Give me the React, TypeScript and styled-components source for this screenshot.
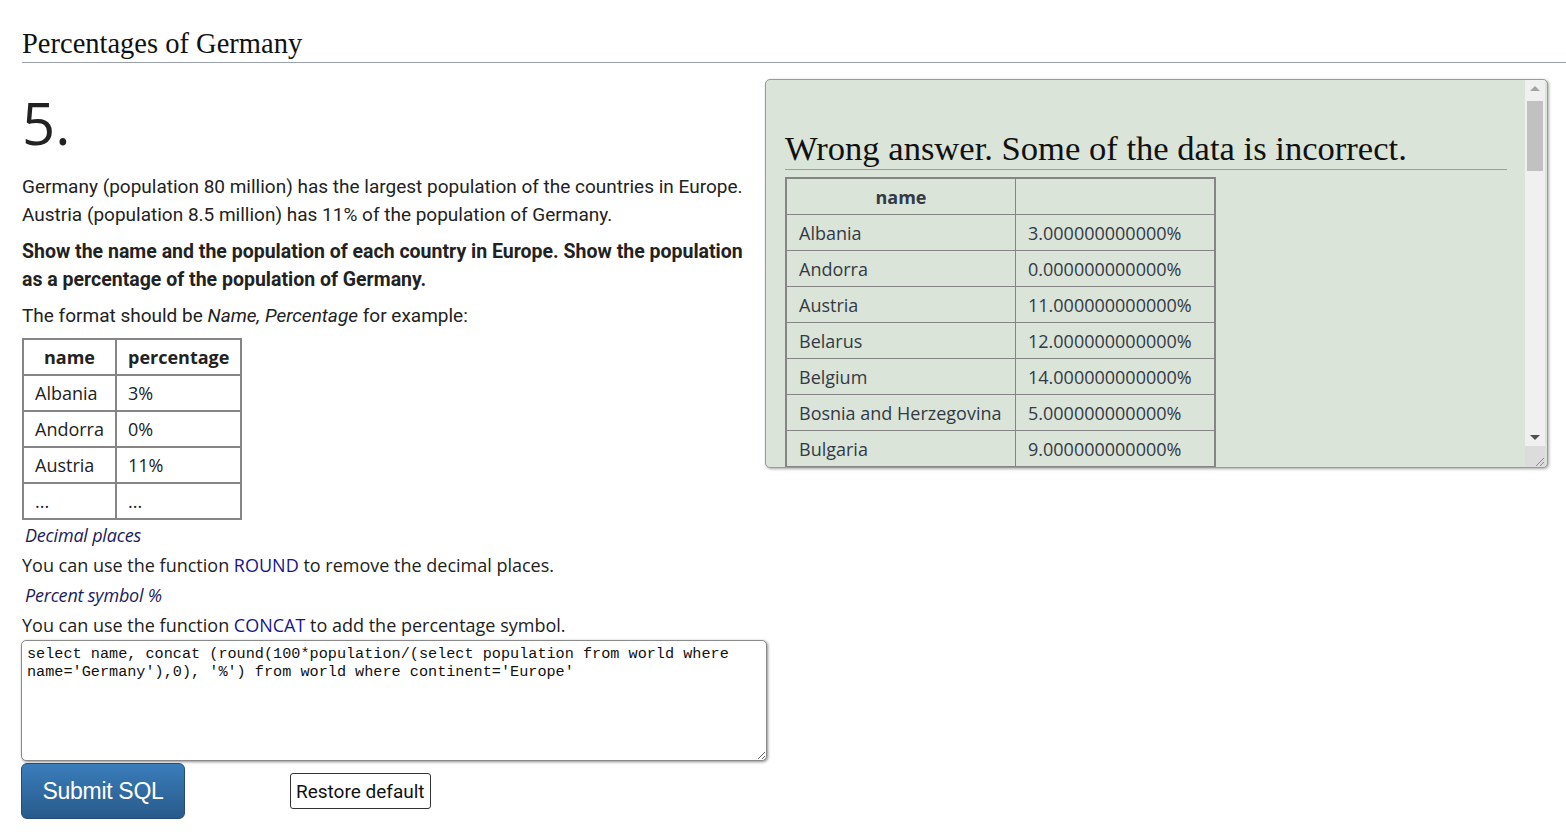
import React from "react";
import styled, { createGlobalStyle } from "styled-components";

const GlobalStyle = createGlobalStyle`
  html, body {
    margin: 0;
    padding: 0;
    background: #ffffff;
  }
  body {
    font-family: Roboto, "Liberation Sans", sans-serif;
    color: #222222;
    overflow: hidden;
  }
`;

const Page = styled.div`
  padding: 22px 0 0 22px;
`;

const Title = styled.h1`
  margin: 0;
  padding: 6px 0 2px 0;
  font-family: "Liberation Serif", serif;
  font-weight: normal;
  font-size: 28.5px;
  line-height: 32px;
  color: #111111;
  border-bottom: 1px solid #9aa0aa;
`;

const Columns = styled.div`
  display: flex;
  align-items: flex-start;
`;

const Left = styled.div`
  width: 744px;
  flex-shrink: 0;
`;

const Number = styled.div`
  font-family: "Open Sans", sans-serif;
  font-size: 58px;
  line-height: 60px;
  color: #222222;
  margin: 30px 0 20px 0;
`;

const Para = styled.p<{ bold?: boolean }>`
  margin: ${(p) => (p.bold ? "9px" : "8px")} 0 0 0;
  font-size: ${(p) => (p.bold ? "19.5px" : "19px")};
  line-height: 28px;
  font-weight: ${(p) => (p.bold ? 700 : 400)};
  color: #222222;
  &:first-of-type {
    margin-top: 0;
  }
`;

const Example = styled.table`
  margin-top: 8px;
  border-collapse: collapse;
  border: 2px solid #858585;
  font-family: "Open Sans", sans-serif;
  font-size: 18px;
  color: #222;
`;

const Th = styled.th`
  border: 2px solid #858585;
  height: 34px;
  padding: 0 11px;
  font-weight: 700;
`;

const Td = styled.td`
  border: 2px solid #858585;
  height: 34px;
  padding: 0 11px;
`;

const Hint = styled.div`
  font-family: "Open Sans", sans-serif;
  font-style: italic;
  font-size: 18px;
  line-height: 30px;
  color: #1c1c5c;
  padding-left: 3px;
  letter-spacing: -0.2px;
`;

const Line = styled.div`
  font-family: "Open Sans", sans-serif;
  font-size: 18px;
  line-height: 30px;
  color: #222;
`;

const Fn = styled.span`
  color: #16168a;
`;

const Editor = styled.textarea`
  display: block;
  box-sizing: border-box;
  width: 746px;
  height: 121px;
  margin: 0 0 0 -1px;
  padding: 4px 5px;
  font-family: "Liberation Mono", monospace;
  font-size: 15.2px;
  line-height: 18px;
  color: #111;
  border: 1px solid #8a8a8a;
  border-radius: 5px;
  box-shadow: 1px 1px 3px rgba(0, 0, 0, 0.45);
  resize: both;
  background: #fff;
`;

const Buttons = styled.div`
  display: flex;
  align-items: center;
  margin-top: 2px;
  margin-left: -1px;
`;

const Submit = styled.button`
  width: 164px;
  height: 56px;
  border: 1px solid #234d75;
  border-radius: 6px;
  background: linear-gradient(#3a7dbb, #285a8a);
  color: #ffffff;
  font-family: "Liberation Sans", Arial, sans-serif;
  font-size: 23px;
  letter-spacing: -0.3px;
  cursor: pointer;
`;

const Restore = styled.button`
  margin-left: 105px;
  height: 36px;
  padding: 0 5px;
  background: #ffffff;
  border: 1px solid #333333;
  border-radius: 3px;
  font-family: Roboto, sans-serif;
  font-size: 19px;
  color: #111;
`;

const Result = styled.div`
  box-sizing: border-box;
  display: flex;
  width: 783px;
  height: 389px;
  margin: 16px 0 0 -1px;
  padding-right: 2px;
  background: #dae4d9;
  border: 1px solid #9a9a9a;
  border-radius: 5px;
  box-shadow: 1px 1px 3px rgba(0, 0, 0, 0.35);
  overflow: hidden;
`;

const ResultBody = styled.div`
  flex: 1;
  min-width: 0;
  padding-left: 19px;
  overflow: hidden;
`;

const ScrollBar = styled.div`
  width: 20px;
  flex-shrink: 0;
  display: flex;
  flex-direction: column;
  background: #f0f0f0;
`;

const Arrow = styled.div<{ down?: boolean }>`
  height: 17px;
  display: flex;
  align-items: center;
  justify-content: center;
  &::after {
    content: "";
    border-left: 5px solid transparent;
    border-right: 5px solid transparent;
    ${(p) =>
      p.down
        ? "border-top: 5px solid #505050;"
        : "border-bottom: 5px solid #a3a3a3;"}
  }
`;

const Track = styled.div`
  flex: 1;
  padding: 4px 2px;
`;

const Thumb = styled.div`
  height: 70px;
  background: #c1c1c1;
`;

const Grip = styled.div`
  height: 21px;
  background: #dcdcdc;
  display: flex;
  align-items: flex-end;
  justify-content: flex-end;
`;

const Verdict = styled.h2`
  margin: 48px 0 7px 0;
  width: 722px;
  padding-bottom: 1px;
  font-family: "Liberation Serif", serif;
  font-weight: normal;
  font-size: 34.6px;
  line-height: 40px;
  color: #111;
  border-bottom: 1px solid #9aa0a0;
`;

const ResultTable = styled.table`
  border-collapse: collapse;
  border: 2px solid #858585;
  font-family: "Open Sans", sans-serif;
  font-size: 18px;
  color: #333a44;
`;

const RTh = styled.th<{ wide?: boolean }>`
  border: 1px solid #858585;
  height: 35px;
  padding: 0 12px;
  font-weight: 700;
  width: ${(p) => (p.wide ? "204px" : "170px")};
`;

const RTd = styled.td<{ wide?: boolean }>`
  border: 1px solid #858585;
  height: 35px;
  padding: 0 12px;
  white-space: nowrap;
  width: ${(p) => (p.wide ? "204px" : "170px")};
`;

const europe: [string, number][] = [
  ["Albania", 3],
  ["Andorra", 0],
  ["Austria", 11],
  ["Belarus", 12],
  ["Belgium", 14],
  ["Bosnia and Herzegovina", 5],
  ["Bulgaria", 9],
  ["Croatia", 5],
  ["Cyprus", 1],
  ["Czech Republic", 13],
  ["Denmark", 7],
  ["Estonia", 2],
  ["Finland", 7],
  ["France", 81],
  ["Germany", 100],
  ["Greece", 13],
  ["Hungary", 12],
  ["Iceland", 0],
  ["Ireland", 6],
  ["Italy", 75],
  ["Kazakhstan", 21],
  ["Kosovo", 2],
  ["Latvia", 2],
  ["Liechtenstein", 0],
  ["Lithuania", 4],
  ["Luxembourg", 1],
  ["Macedonia", 3],
  ["Malta", 1],
  ["Moldova", 4],
  ["Monaco", 0],
  ["Montenegro", 1],
  ["Netherlands", 21],
  ["Norway", 6],
  ["Poland", 47],
  ["Portugal", 13],
  ["Romania", 24],
  ["San Marino", 0],
  ["Serbia", 9],
  ["Slovakia", 7],
  ["Slovenia", 3],
  ["Spain", 57],
  ["Sweden", 12],
  ["Switzerland", 10],
  ["Ukraine", 53],
  ["United Kingdom", 80],
  ["Vatican City", 0],
];

const sample = [
  ["Albania", "3%"],
  ["Andorra", "0%"],
  ["Austria", "11%"],
  ["...", "..."],
];

const sql =
  "select name, concat (round(100*population/(select population from world where name='Germany'),0), '%') from world where continent='Europe'";

const ResizeMark = () => (
  <svg width="12" height="12" viewBox="0 0 12 12">
    <path d="M11 3 L3 11 M11 7 L7 11" stroke="#8a8a8a" strokeWidth="1" />
  </svg>
);

const App: React.FC = () => {
  return (
    <>
      <GlobalStyle />
      <Page>
        <Title>Percentages of Germany</Title>
        <Columns>
          <Left>
            <Number>5.</Number>
            <Para>
              Germany (population 80 million) has the largest population of the
              countries in Europe. Austria (population 8.5 million) has 11% of
              the population of Germany.
            </Para>
            <Para bold>
              Show the name and the population of each country in Europe. Show
              the population as a percentage of the population of Germany.
            </Para>
            <Para>
              The format should be <i>Name, Percentage</i> for example:
            </Para>
            <Example>
              <thead>
                <tr>
                  <Th>name</Th>
                  <Th>percentage</Th>
                </tr>
              </thead>
              <tbody>
                {sample.map(([n, p]) => (
                  <tr key={n}>
                    <Td>{n}</Td>
                    <Td>{p}</Td>
                  </tr>
                ))}
              </tbody>
            </Example>
            <Hint>Decimal places</Hint>
            <Line>
              You can use the function <Fn>ROUND</Fn> to remove the decimal
              places.
            </Line>
            <Hint>Percent symbol %</Hint>
            <Line>
              You can use the function <Fn>CONCAT</Fn> to add the percentage
              symbol.
            </Line>
            <Editor defaultValue={sql} spellCheck={false} />
            <Buttons>
              <Submit>Submit SQL</Submit>
              <Restore>Restore default</Restore>
            </Buttons>
          </Left>
          <Result>
            <ResultBody>
              <Verdict>Wrong answer. Some of the data is incorrect.</Verdict>
              <ResultTable>
                <thead>
                  <tr>
                    <RTh wide>name</RTh>
                    <RTh></RTh>
                  </tr>
                </thead>
                <tbody>
                  {europe.map(([n, p]) => (
                    <tr key={n}>
                      <RTd wide>{n}</RTd>
                      <RTd>{`${p}.000000000000%`}</RTd>
                    </tr>
                  ))}
                </tbody>
              </ResultTable>
            </ResultBody>
            <ScrollBar>
              <Arrow />
              <Track>
                <Thumb />
              </Track>
              <Arrow down />
              <Grip>
                <ResizeMark />
              </Grip>
            </ScrollBar>
          </Result>
        </Columns>
      </Page>
    </>
  );
};

export default App;
